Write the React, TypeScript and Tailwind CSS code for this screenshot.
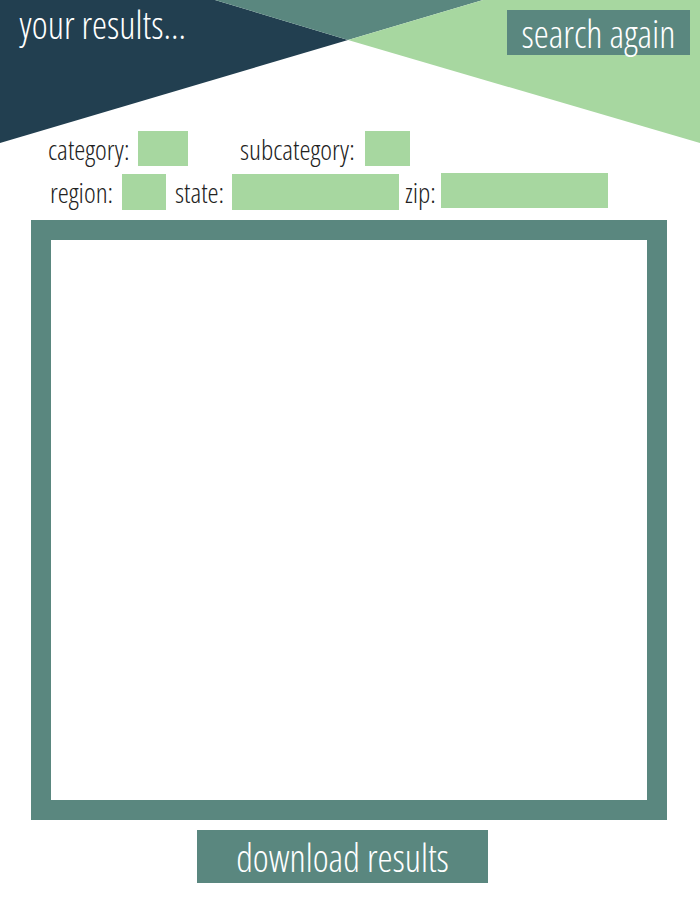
export default function App() {
  return (
    <div className="relative w-[700px] h-[900px] overflow-hidden bg-white font-['Open_Sans','DejaVu_Sans',sans-serif] font-light [font-stretch:75%]">
      {/* header shapes */}
      <svg
        className="absolute left-0 top-0"
        width="700"
        height="150"
        viewBox="0 0 700 150"
        aria-hidden="true"
      >
        <polygon points="0,0 215,0 348,40 0,143" fill="#223f50" />
        <polygon points="215,0 483,0 348,40" fill="#5a877f" />
        <polygon points="483,0 700,0 700,143 348,40" fill="#a7d7a0" />
      </svg>

      <div className="relative flex items-start justify-between">
        <h1 className="ml-[19px] mt-[2px] text-[38px] leading-[44px] text-white">
          your results...
        </h1>
        <button className="mr-[10px] mt-[10px] flex h-[45px] w-[183px] items-center justify-center bg-[#5a877f] text-[38px] leading-none text-white">
          search again
        </button>
      </div>

      {/* filters */}
      <div className="relative mt-[76px] flex items-center pl-[48px] text-[28px] leading-none text-[#222]">
        <span className="w-[90px]">category:</span>
        <div className="h-[35px] w-[50px] bg-[#a7d7a0]" />
        <span className="ml-[52px] w-[125px]">subcategory:</span>
        <div className="h-[35px] w-[45px] bg-[#a7d7a0]" />
      </div>
      <div className="relative mt-[8px] flex items-center pl-[50px] text-[28px] leading-none text-[#222]">
        <span className="w-[72px]">region:</span>
        <div className="h-[36px] w-[44px] bg-[#a7d7a0]" />
        <span className="ml-[9px] w-[57px]">state:</span>
        <div className="h-[36px] w-[167px] bg-[#a7d7a0]" />
        <span className="ml-[6px] w-[36px]">zip:</span>
        <div className="-mt-[3px] h-[35px] w-[167px] bg-[#a7d7a0]" />
      </div>

      {/* results frame */}
      <div className="ml-[31px] mt-[10px] h-[600px] w-[636px] border-[20px] border-[#5a877f] bg-white" />

      <div className="mt-[10px] flex pl-[197px]">
        <button className="flex h-[53px] w-[291px] items-center justify-center bg-[#5a877f] text-[38px] leading-none text-white">
          download results
        </button>
      </div>
    </div>
  );
}
